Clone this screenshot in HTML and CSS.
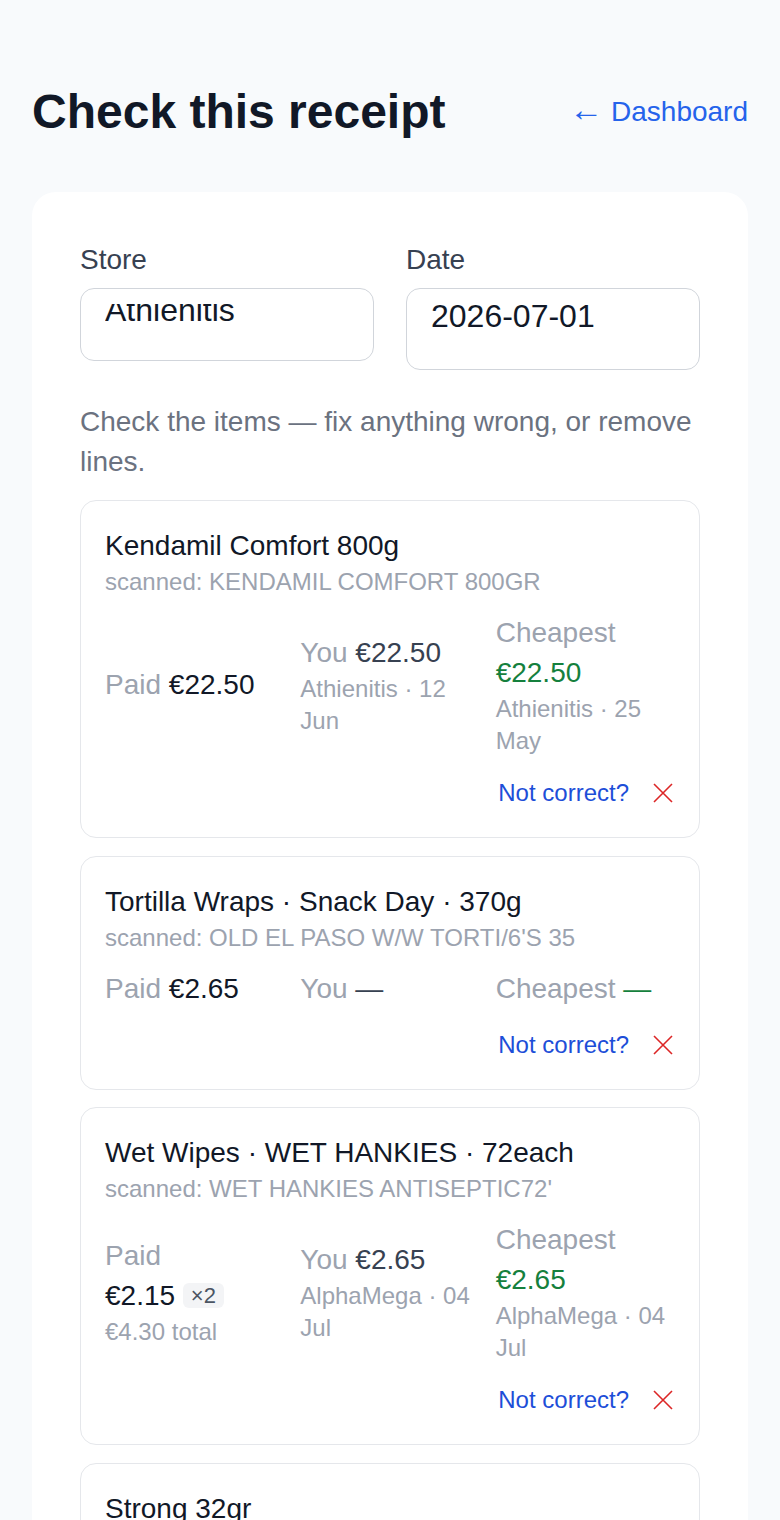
FILE: index.html
```html
<!DOCTYPE html>
<html lang="en">
<head>
    <meta charset="UTF-8">
    <meta name="viewport" content="width=device-width, initial-scale=1.0">
    <title>Check this receipt</title>
    <link rel="stylesheet" href="styles.css">
</head>
<body>
    <main class="page">
        <header class="top">
            <h1>Check this receipt</h1>
            <a class="back" href="#"><span class="arrow">&larr;</span> Dashboard</a>
        </header>

        <section class="panel">
            <div class="fields">
                <div class="field">
                    <label for="store">Store</label>
                    <input id="store" class="store-input" type="text" value="Athienitis">
                </div>
                <div class="field">
                    <label for="date">Date</label>
                    <input id="date" class="date-input" type="text" value="2026-07-01">
                </div>
            </div>

            <p class="hint">Check the items — fix anything wrong, or remove lines.</p>

            <div class="items">
                <!-- item 1 -->
                <div class="item">
                    <div class="item-name">Kendamil Comfort 800g</div>
                    <div class="scanned">scanned: KENDAMIL COMFORT 800GR</div>
                    <div class="prices">
                        <div class="col">
                            <span class="lbl">Paid</span> <span class="paid">€22.50</span>
                        </div>
                        <div class="col">
                            <span class="lbl">You</span> <span class="you">€22.50</span>
                            <div class="sub">Athienitis · 12 Jun</div>
                        </div>
                        <div class="col">
                            <span class="lbl">Cheapest</span> <span class="best">€22.50</span>
                            <div class="sub">Athienitis · 25 May</div>
                        </div>
                    </div>
                    <div class="actions">
                        <a class="fix" href="#">Not correct?</a>
                        <button class="remove" title="Remove line">
                            <svg viewBox="0 0 24 24" width="24" height="24"><path d="M3 3L21 21M21 3L3 21"/></svg>
                        </button>
                    </div>
                </div>

                <!-- item 2 -->
                <div class="item">
                    <div class="item-name">Tortilla Wraps · Snack Day · 370g</div>
                    <div class="scanned">scanned: OLD EL PASO W/W TORTI/6'S 35</div>
                    <div class="prices">
                        <div class="col">
                            <span class="lbl">Paid</span> <span class="paid">€2.65</span>
                        </div>
                        <div class="col">
                            <span class="lbl">You</span> <span class="you">—</span>
                        </div>
                        <div class="col">
                            <span class="lbl">Cheapest</span> <span class="best">—</span>
                        </div>
                    </div>
                    <div class="actions">
                        <a class="fix" href="#">Not correct?</a>
                        <button class="remove" title="Remove line">
                            <svg viewBox="0 0 24 24" width="24" height="24"><path d="M3 3L21 21M21 3L3 21"/></svg>
                        </button>
                    </div>
                </div>

                <!-- item 3 -->
                <div class="item">
                    <div class="item-name">Wet Wipes · WET HANKIES · 72each</div>
                    <div class="scanned">scanned: WET HANKIES ANTISEPTIC72'</div>
                    <div class="prices">
                        <div class="col">
                            <span class="lbl">Paid</span> <span class="paid nowrap">€2.15 <span class="qty">×2</span></span>
                            <div class="sub">€4.30 total</div>
                        </div>
                        <div class="col">
                            <span class="lbl">You</span> <span class="you">€2.65</span>
                            <div class="sub">AlphaMega · 04 Jul</div>
                        </div>
                        <div class="col">
                            <span class="lbl">Cheapest</span> <span class="best">€2.65</span>
                            <div class="sub">AlphaMega · 04 Jul</div>
                        </div>
                    </div>
                    <div class="actions">
                        <a class="fix" href="#">Not correct?</a>
                        <button class="remove" title="Remove line">
                            <svg viewBox="0 0 24 24" width="24" height="24"><path d="M3 3L21 21M21 3L3 21"/></svg>
                        </button>
                    </div>
                </div>

                <!-- item 4 -->
                <div class="item">
                    <div class="item-name">Strong 32gr</div>
                    <div class="scanned">scanned: STRONG 32GR</div>
                    <div class="prices">
                        <div class="col">
                            <span class="lbl">Paid</span> <span class="paid">€1.20</span>
                        </div>
                        <div class="col">
                            <span class="lbl">You</span> <span class="you">—</span>
                        </div>
                        <div class="col">
                            <span class="lbl">Cheapest</span> <span class="best">—</span>
                        </div>
                    </div>
                    <div class="actions">
                        <a class="fix" href="#">Not correct?</a>
                        <button class="remove" title="Remove line">
                            <svg viewBox="0 0 24 24" width="24" height="24"><path d="M3 3L21 21M21 3L3 21"/></svg>
                        </button>
                    </div>
                </div>
            </div>
        </section>
    </main>
</body>
</html>
```

FILE: styles.css
```css
body {
    margin: 0;
    background-color: #f8fafc;
    font-family: "Liberation Sans", Arial, sans-serif;
    color: #111827;
}
.page {
    padding: 80px 32px 48px;
}
.top {
    display: flex;
    align-items: center;
    justify-content: space-between;
    margin-bottom: 48px;
}
.top h1 {
    margin: 0;
    font-size: 48px;
    line-height: 64px;
    font-weight: bold;
    color: #111827;
}
.back {
    font-size: 28px;
    line-height: 40px;
    color: #2563eb;
    text-decoration: none;
}
.back .arrow {
    font-size: 34px;
    line-height: 28px;
}
.panel {
    background-color: #fff;
    border-radius: 24px;
    padding: 48px;
}
.fields {
    display: grid;
    grid-template-columns: 1fr 1fr;
    gap: 32px;
    align-items: start;
}
.field label {
    display: block;
    font-size: 28px;
    line-height: 40px;
    color: #374151;
    margin-bottom: 8px;
}
.field input {
    display: block;
    width: 100%;
    box-sizing: border-box;
    border: 1px solid #d1d5db;
    border-radius: 14px;
    background: #fff;
    font-family: "Liberation Sans", Arial, sans-serif;
    font-size: 32px;
    color: #111827;
    outline: none;
}
.field .store-input {
    height: 73px;
    border: 0;
    border-top: 16px solid transparent;
    outline: 1px solid #d1d5db;
    outline-offset: -1px;
    padding: 0 25px 44px;
}
.date-input {
    height: 82px;
    padding: 9px 24px 34px;
}
.hint {
    margin: 32px 0 18px;
    font-size: 28px;
    line-height: 40px;
    color: #6b7280;
}
.items {
    display: flex;
    flex-direction: column;
    gap: 17.5px;
}
.item {
    border: 1px solid #e5e7eb;
    border-radius: 16px;
    padding: 25px 24px 24px;
}
.item-name {
    font-size: 28px;
    line-height: 40px;
    color: #111827;
}
.scanned {
    font-size: 24px;
    line-height: 32px;
    color: #9ca3af;
}
.prices {
    display: grid;
    grid-template-columns: 1fr 1fr 1fr;
    gap: 16px;
    align-items: center;
    margin-top: 15px;
    font-size: 28px;
    line-height: 40px;
}
.lbl {
    color: #9ca3af;
}
.paid {
    color: #111827;
}
.you {
    color: #374151;
}
.best {
    color: #15803d;
}
.nowrap {
    white-space: nowrap;
}
.qty {
    display: inline-block;
    vertical-align: middle;
    margin-top: -4px;
    padding: 2px 8px;
    font-size: 22px;
    line-height: 21px;
    color: #4b5563;
    background-color: #f3f4f6;
    border-radius: 6px;
}
.sub {
    font-size: 24px;
    line-height: 32px;
    color: #9ca3af;
}
.actions {
    display: flex;
    justify-content: flex-end;
    align-items: center;
    gap: 22px;
    margin-top: 16px;
}
.fix {
    font-size: 24px;
    line-height: 40px;
    color: #1d4ed8;
    text-decoration: none;
}
.remove {
    display: flex;
    padding: 0;
    border: none;
    background: none;
    cursor: pointer;
}
.remove svg {
    width: 24px;
    height: 24px;
    fill: none;
    stroke: #dc2626;
    stroke-width: 1.6;
}
```
